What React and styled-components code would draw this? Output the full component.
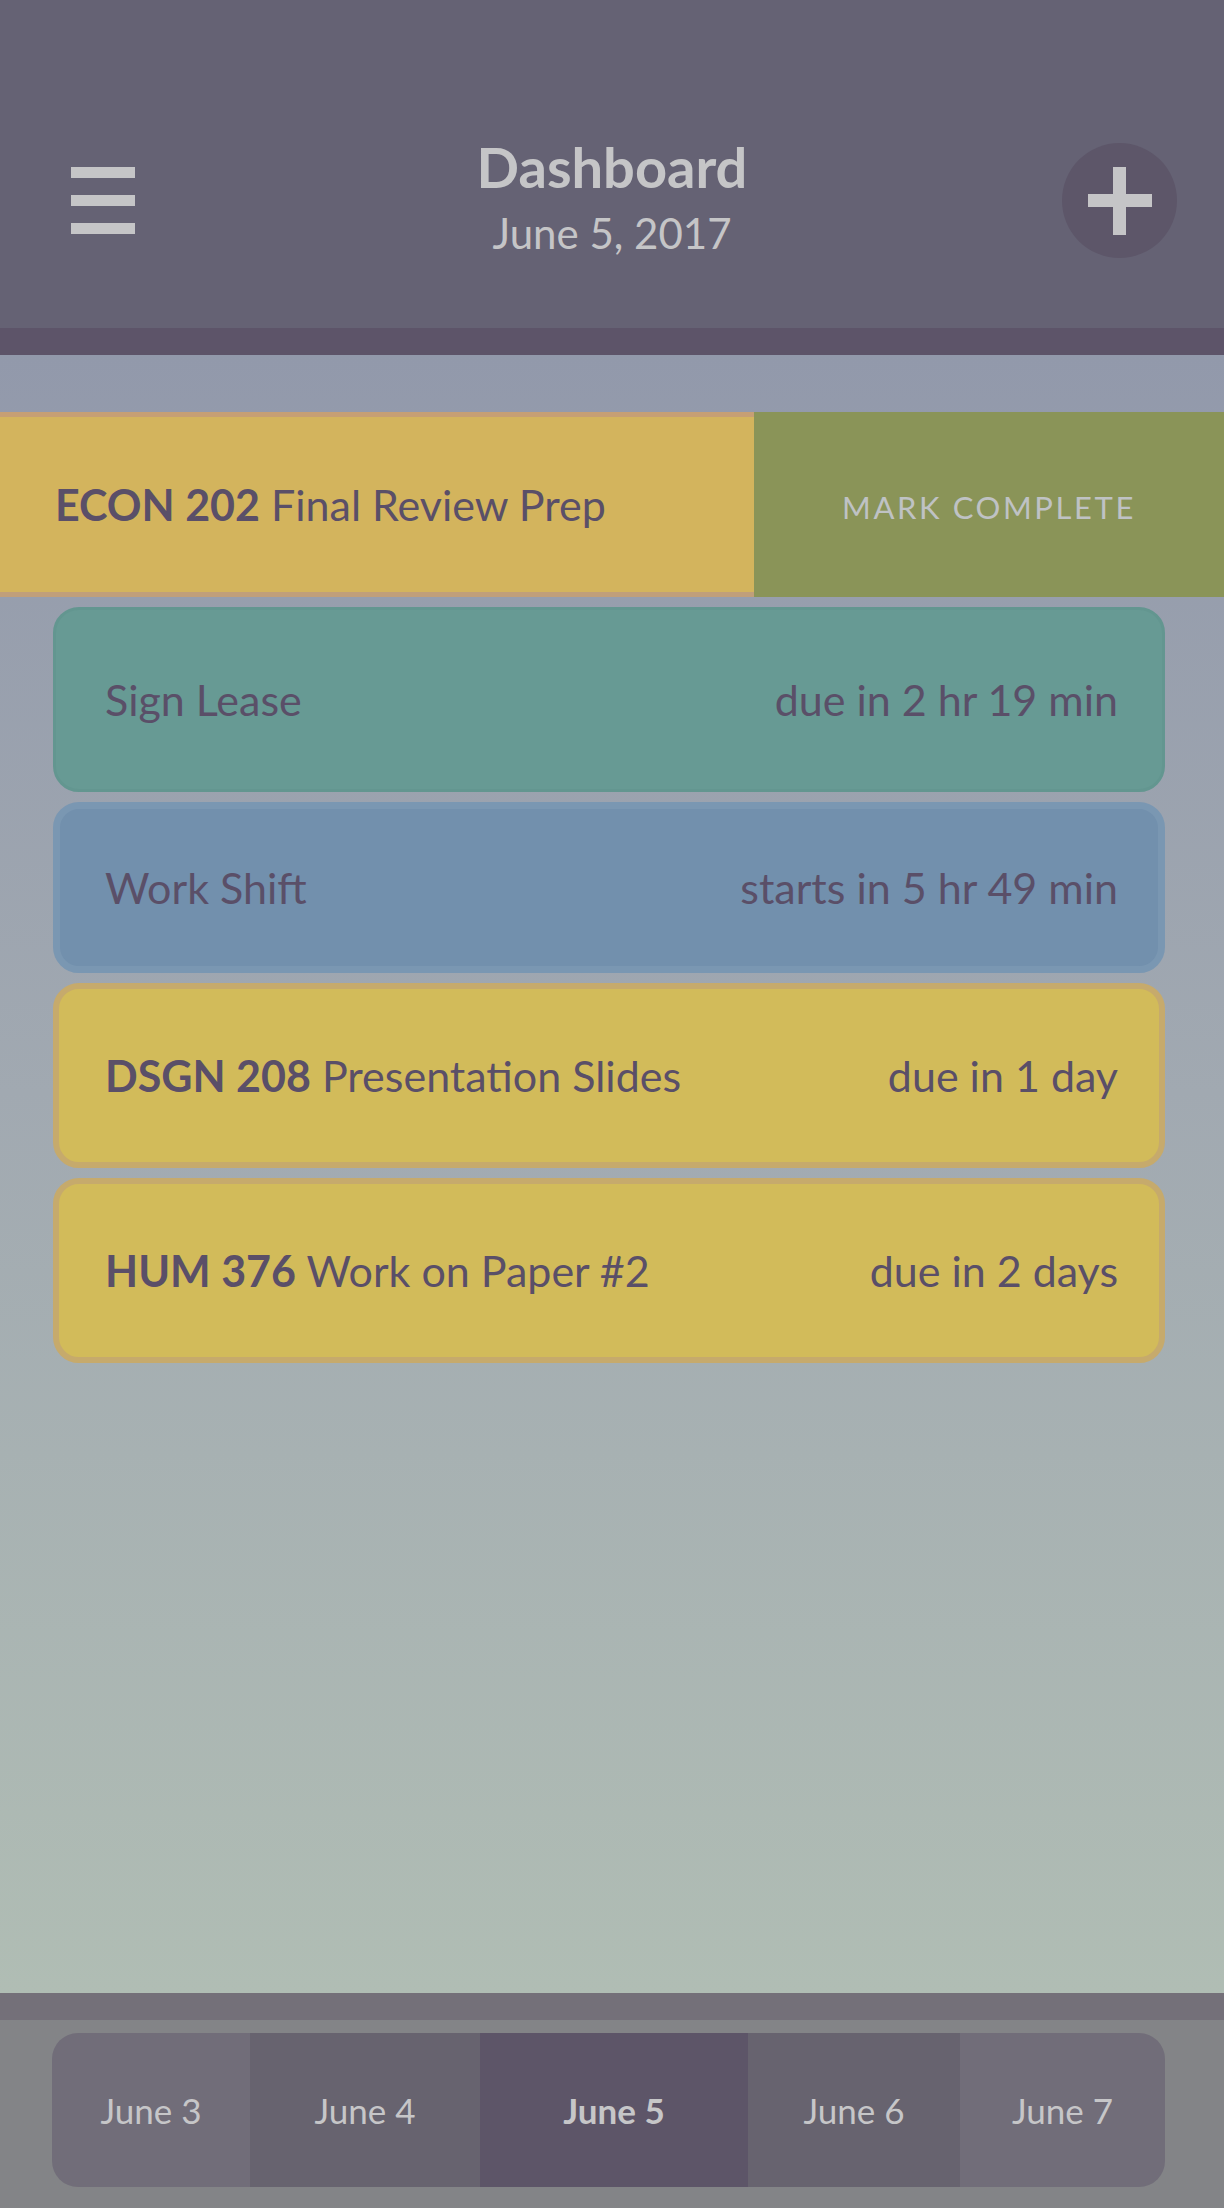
import styled, { createGlobalStyle, css } from "styled-components";

const GlobalStyle = createGlobalStyle`
body {
    margin: 0;
    font-family: Lato, "Open Sans", sans-serif;
}
* {
    box-sizing: border-box;
}
`;

const Page = styled.div`
width: 1224px;
min-height: 2208px;
display: flex;
flex-direction: column;
`;

const Header = styled.header`
background-color: #656274;
display: grid;
grid-template-columns: 1fr auto 1fr;
align-items: center;
padding: 143px 47px 70px 47px;
border-bottom: 27px solid #5d5469;
height: 355px;
`;

const MenuButton = styled.button`
justify-self: start;
margin-left: 24px;
border: 0;
padding: 0;
background: transparent;
width: 64px;
height: 67px;
svg {
    display: block;
}
`;

const TitleBlock = styled.div`
align-self: start;
margin-top: -7px;
text-align: center;
color: #c5c5c7;
`;

const Title = styled.h1`
margin: 0 0 10px;
font-size: 56px;
font-weight: 700;
line-height: 62px;
`;

const SubTitle = styled.div`
font-size: 42px;
font-weight: 400;
line-height: 50px;
`;

const AddButton = styled.button`
justify-self: end;
width: 115px;
height: 115px;
border-radius: 50%;
border: 0;
padding: 0;
background-color: #5d5669;
display: flex;
align-items: center;
justify-content: center;
`;

const Main = styled.main`
flex: 1;
background: linear-gradient(#9299ab 0%, #a1a9b1 45%, #b0bdb4 100%);
padding-top: 57px;
`;

const SwipeRow = styled.div`
display: flex;
height: 185px;
`;

const SwipeCard = styled.div`
flex: 0 0 754px;
background-color: #d3b45d;
border-top: 5px solid #c69f74;
border-bottom: 5px solid #c09f7a;
display: flex;
align-items: center;
padding-left: 55px;
font-size: 43px;
color: #5a4f68;
`;

const SwipeAction = styled.div`
flex: 1;
background-color: #8a9458;
display: flex;
align-items: center;
justify-content: center;
color: #bfc2c4;
font-size: 31px;
letter-spacing: 2.6px;
padding-top: 4px;
`;

const CardList = styled.div`
display: flex;
flex-direction: column;
gap: 10px;
padding: 10px 59px 0 53px;
`;

const tones = {
    teal: css`
        background-color: #679a94;
        border: 3px solid #639690;
    `,
    blue: css`
        background-color: #7290ad;
        border: 7px solid #7a97b2;
    `,
    yellow: css`
        background-color: #d2bb5a;
        border: 6px solid #c6aa6c;
    `,
};

const Card = styled.div`
height: ${props => props.$height}px;
border-radius: 26px;
display: flex;
align-items: center;
justify-content: space-between;
padding: 0 ${props => 47 - props.$border}px 0 ${props => 52 - props.$border}px;
font-size: 43px;
color: #5a4f68;
${props => tones[props.$tone]}
`;

const Code = styled.b`
font-weight: 700;
`;

const Footer = styled.footer`
background-color: #838487;
border-top: 27px solid #747079;
padding: 13px 59px 21px 52px;
`;

const Tabs = styled.div`
display: flex;
height: 154px;
border-radius: 26px;
overflow: hidden;
`;

const Tab = styled.div`
flex: 0 0 ${props => props.$width}px;
background-color: ${props => props.$bg};
display: flex;
align-items: center;
justify-content: center;
color: #c6c6c8;
font-size: 35px;
font-weight: ${props => props.$active ? 700 : 400};
`;

const tasks = [
    { tone: "teal", border: 3, height: 185, title: "Sign Lease", due: "due in 2 hr 19 min" },
    { tone: "blue", border: 7, height: 171, title: "Work Shift", due: "starts in 5 hr 49 min" },
    { tone: "yellow", border: 6, height: 185, code: "DSGN 208", title: "Presentation Slides", due: "due in 1 day" },
    { tone: "yellow", border: 6, height: 185, code: "HUM 376", title: "Work on Paper #2", due: "due in 2 days" },
];

const days = [
    { label: "June 3", width: 198, bg: "#716d79" },
    { label: "June 4", width: 230, bg: "#67636f" },
    { label: "June 5", width: 268, bg: "#5d5568", active: true },
    { label: "June 6", width: 212, bg: "#67636f" },
    { label: "June 7", width: 205, bg: "#716d79" },
];

export default function App() {
    return (
        <Page>
            <GlobalStyle />
            <Header>
                <MenuButton>
                    <svg width="64" height="67" viewBox="0 0 64 67">
                        <rect x="0" y="0" width="64" height="11" fill="#c5c5c7" />
                        <rect x="0" y="28" width="64" height="11" fill="#c5c5c7" />
                        <rect x="0" y="56" width="64" height="11" fill="#c5c5c7" />
                    </svg>
                </MenuButton>
                <TitleBlock>
                    <Title>Dashboard</Title>
                    <SubTitle>June 5, 2017</SubTitle>
                </TitleBlock>
                <AddButton>
                    <svg width="64" height="68" viewBox="0 0 64 68">
                        <rect x="25" y="0" width="13" height="68" fill="#c5c5c7" />
                        <rect x="0" y="27" width="64" height="13" fill="#c5c5c7" />
                    </svg>
                </AddButton>
            </Header>
            <Main>
                <SwipeRow>
                    <SwipeCard>
                        <span><Code>ECON 202</Code> Final Review Prep</span>
                    </SwipeCard>
                    <SwipeAction>MARK COMPLETE</SwipeAction>
                </SwipeRow>
                <CardList>
                    {tasks.map(task => (
                        <Card key={task.title} $tone={task.tone} $border={task.border} $height={task.height}>
                            <span>
                                {task.code && <Code>{task.code}</Code>}
                                {task.code && " "}
                                {task.title}
                            </span>
                            <span>{task.due}</span>
                        </Card>
                    ))}
                </CardList>
            </Main>
            <Footer>
                <Tabs>
                    {days.map(day => (
                        <Tab key={day.label} $width={day.width} $bg={day.bg} $active={day.active}>
                            {day.label}
                        </Tab>
                    ))}
                </Tabs>
            </Footer>
        </Page>
    );
}
